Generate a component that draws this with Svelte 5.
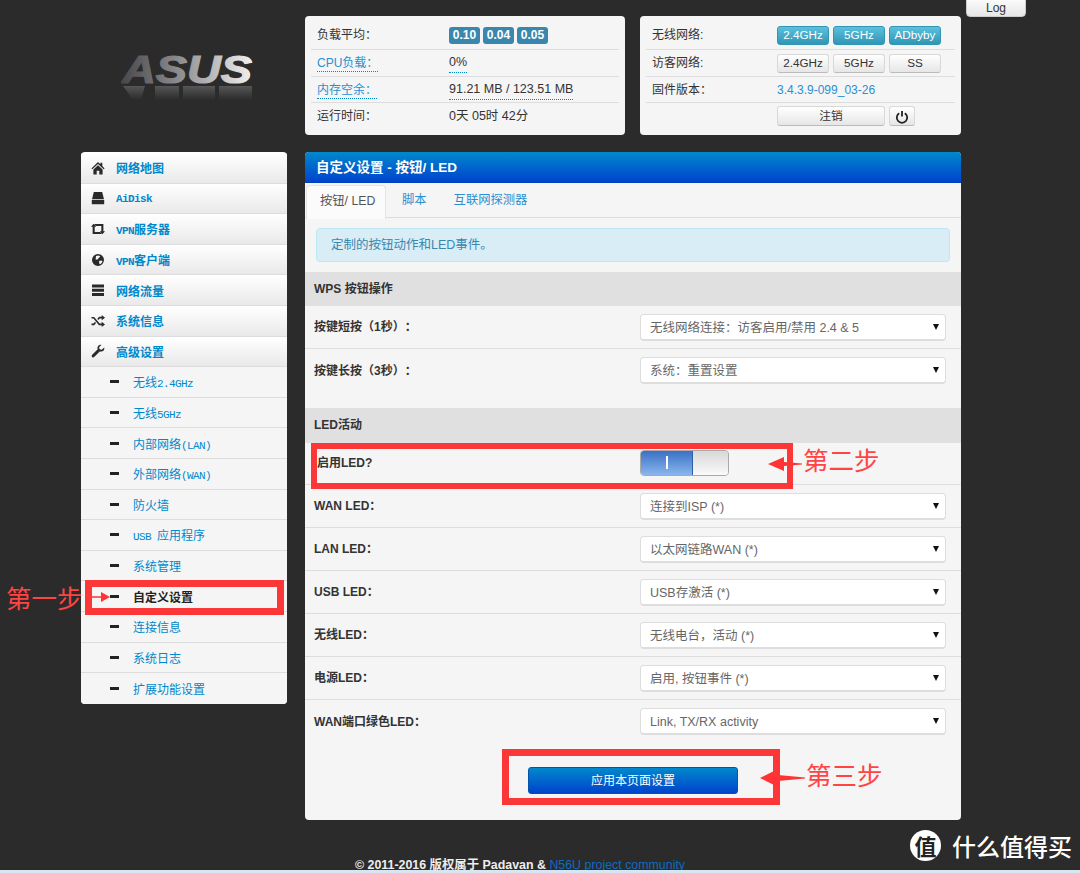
<script>
	const navMain = [
		{ label: '网络地图', icon: 'home' },
		{ label: 'AiDisk', icon: 'disk' },
		{ label: 'VPN服务器', icon: 'retweet' },
		{ label: 'VPN客户端', icon: 'globe' },
		{ label: '网络流量', icon: 'tasks' },
		{ label: '系统信息', icon: 'random' },
		{ label: '高级设置', icon: 'wrench' }
	];
	const navSub = [
		'无线2.4GHz',
		'无线5GHz',
		'内部网络(LAN)',
		'外部网络(WAN)',
		'防火墙',
		'USB 应用程序',
		'系统管理',
		'自定义设置',
		'连接信息',
		'系统日志',
		'扩展功能设置'
	];
	const ledRows = [
		['WAN LED：', '连接到ISP (*)'],
		['LAN LED：', '以太网链路WAN (*)'],
		['USB LED：', 'USB存激活 (*)'],
		['无线LED：', '无线电台，活动 (*)'],
		['电源LED：', '启用, 按钮事件 (*)'],
		['WAN端口绿色LED：', 'Link, TX/RX activity']
	];

	// the sidebar latin runs are half-width, like a bitmap CJK font
	const runs = (s) => s.split(/([\x20-\x7e]+)/).filter(Boolean);
	const isLatin = (s) => /^[\x20-\x7e]+$/.test(s);
</script>

<div class="page">
	<button class="log">Log</button>

	<div class="top">
		<div class="logo">
			<svg width="134" height="56" viewBox="0 0 134 56" aria-label="ASUS">
				<defs>
					<linearGradient id="metal" x1="0" x2="1" y1="0" y2="0">
						<stop offset="0" stop-color="#47474b" />
						<stop offset="0.45" stop-color="#8e8d90" />
						<stop offset="1" stop-color="#f0f0f0" />
					</linearGradient>
					<linearGradient id="fade" x1="0" x2="0" y1="0" y2="1">
						<stop offset="0" stop-color="#8a8a8a" stop-opacity="0.45" />
						<stop offset="1" stop-color="#8a8a8a" stop-opacity="0" />
					</linearGradient>
				</defs>
				<text x="1" y="36" class="logo-text" fill="url(#metal)" stroke="url(#metal)" stroke-width="1.2" textLength="130" lengthAdjust="spacingAndGlyphs">ASUS</text>
				<!-- reflection -->
				<path d="M2 39h22l-4 14H12zM34 39h24v14H34zM62 39h32v14H62zM98 39h33v14H98z" fill="url(#fade)" />
			</svg>
		</div>

		<div class="panel stats">
			<div class="srow">
				<span class="k">负载平均：</span>
				<span class="v"><b class="badge">0.10</b><b class="badge">0.04</b><b class="badge">0.05</b></span>
			</div>
			<div class="srow">
				<span class="k"><a class="dot">CPU负载：</a></span>
				<span class="v"><span class="dotv">0%</span></span>
			</div>
			<div class="srow">
				<span class="k"><a class="dot">内存空余：</a></span>
				<span class="v"><span class="dotv">91.21 MB / 123.51 MB</span></span>
			</div>
			<div class="srow">
				<span class="k">运行时间：</span>
				<span class="v">0天 05时 42分</span>
			</div>
		</div>

		<div class="panel net">
			<div class="srow">
				<span class="k">无线网络:</span>
				<span class="btns">
					<button class="mini on">2.4GHz</button>
					<button class="mini on">5GHz</button>
					<button class="mini on">ADbyby</button>
				</span>
			</div>
			<div class="srow">
				<span class="k">访客网络:</span>
				<span class="btns">
					<button class="mini">2.4GHz</button>
					<button class="mini">5GHz</button>
					<button class="mini">SS</button>
				</span>
			</div>
			<div class="srow">
				<span class="k">固件版本：</span>
				<a class="fw">3.4.3.9-099_03-26</a>
			</div>
			<div class="srow">
				<span class="k"></span>
				<span class="btns">
					<button class="mini logout">注销</button>
					<button class="mini power" aria-label="power">
						<svg width="14" height="14" viewBox="0 0 14 14">
							<path d="M4.200 3.200a5.200 5.200 0 1 0 5.600 0" fill="none" stroke="#222" stroke-width="1.800" />
							<path d="M7 1v5.600" stroke="#222" stroke-width="1.800" />
						</svg>
					</button>
				</span>
			</div>
		</div>
	</div>

	<div class="body">
		<nav class="side">
			{#each navMain as item}
				<div class="nav main">
					<span class="ico">
						<svg width="14" height="14" viewBox="0 0 14 14" fill="#2a2a2a">
							{#if item.icon === 'home'}
								<path d="M7 1 0.400 7.400l.9.9L7 3l5.700 5.300.9-.9L11.300 5V1.800H9.400v1.400zM2.400 8.500V13.400h3.300V9.800h2.600v3.600h3.300V8.500L7 4.300z" />
							{:else if item.icon === 'disk'}
								<path d="M2.800 1h8.400L13 8.200H1zM.8 9h12.400v4.200H.8z" />
							{:else if item.icon === 'retweet'}
								<path d="M0 4.800 2.600 1.800l2.600 3H3.700V10h5.500l1.600 1.900H1.600V4.800zM14 9.200l-2.600 3-2.600-3h1.500V4H4.800L3.200 2.100h9.200v7.100z" />
							{:else if item.icon === 'globe'}
								<path fill-rule="evenodd" d="M7 1a6 6 0 1 0 0 12A6 6 0 0 0 7 1zM5 3l2.600-.6 1.700 1-1.600 1.500-1 1.500H4.600zM8 8l2.600-.6 1 1.200-2 2.600-1.400-.6z" />
							{:else if item.icon === 'tasks'}
								<path d="M1 1.500h12v3H1zM1 5.700h12v3H1zM1 9.900h12v3H1z" />
							{:else if item.icon === 'random'}
								<path d="M.5 3h2.600l5.600 6.600h2V7.800L14 10.400 10.700 13v-1.800H8L2.400 4.600H.5zM.5 9.600h2l1.500-1.800 1 1.300-1.800 2.100H.5zM8 2.800h2.700V1L14 3.700l-3.300 2.600V4.500h-2L7.300 6.100l-1-1.200z" />
							{:else}
								<path d="M13.200 3.400 10.700 5.800 8.600 5.300 8.100 3.200 10.500.8C8.700.2 6.700 1.600 6.500 3.500c-.1.700 0 1.300.2 1.800L1 11a1.500 1.500 0 0 0 2.100 2.100l5.700-5.700c2.600.9 5.200-1.500 4.400-4z" />
							{/if}
						</svg>
					</span>
					<a>{#each runs(item.label) as r}<span class:lat={isLatin(r)}>{r}</span>{/each}</a>
				</div>
			{/each}
			{#each navSub as label}
				<div class="nav sub" class:current={label === '自定义设置'}>
					<span class="minus"></span>
					<a>{#each runs(label) as r}<span class:lat={isLatin(r)}>{r}</span>{/each}</a>
				</div>
			{/each}
		</nav>

		<main class="card">
			<h2 class="head">自定义设置 - 按钮/ LED</h2>
			<div class="tabs">
				<span class="tab active">按钮/ LED</span>
				<a class="tab">脚本</a>
				<a class="tab">互联网探测器</a>
			</div>
			<div class="alert">定制的按钮动作和LED事件。</div>

			<div class="section">WPS 按钮操作</div>
			<div class="row">
				<label>按键短按（1秒）：</label>
				<div class="select">无线网络连接：访客启用/禁用 2.4 &amp; 5</div>
			</div>
			<div class="row plain">
				<label>按键长按（3秒）：</label>
				<div class="select">系统：重置设置</div>
			</div>

			<div class="section led">LED活动</div>
			<div class="row short">
				<label class="tight">启用LED?</label>
				<div class="switch"><span class="sw-on"><i></i></span><span class="sw-off"></span></div>
			</div>
			{#each ledRows as [name, value], i}
				<div class="row" class:plain={i === ledRows.length - 1}>
					<label>{name}</label>
					<div class="select">{value}</div>
				</div>
			{/each}

			<div class="apply"><button>应用本页面设置</button></div>
		</main>
	</div>

	<footer>© 2011-2016 版权属于 Padavan &amp; <a>N56U project community</a></footer>

	<!-- annotations drawn over the screenshot -->
	<div class="mark one"></div>
	<div class="mark two"></div>
	<div class="mark three"></div>
	<span class="note n1">第一步</span>
	<span class="note n2">第二步</span>
	<span class="note n3">第三步</span>
	<svg class="arrows" width="1080" height="873" viewBox="0 0 1080 873">
		<g fill="#f33">
			<path d="M92 596.300h9V592l9 5-9 5v-4.300h-9z" />
			<path d="M768 464l16-7v5l18 1.500v1L784 466v5z" />
			<path d="M760 778l18-9v6l27 2.500v1L778 781v6z" />
		</g>
	</svg>

	<div class="wm">
		<span class="wm-badge">值</span>
		<span class="wm-text">什么值得买</span>
	</div>
	<div class="strip"></div>
</div>

<style>
	:global(body) {
		background: #2b2b2b;
	}
	.page {
		position: relative;
		width: 1080px;
		height: 873px;
		overflow: hidden;
		box-sizing: border-box;
		padding-top: 16px;
		background: #2b2b2b;
		font-family: 'Liberation Sans', 'Noto Sans CJK SC', sans-serif;
		font-size: 12px;
		color: #333;
		text-spacing-trim: space-all;
	}
	a {
		color: #0088cc;
	}
	button {
		font-family: inherit;
		cursor: pointer;
	}
	.log {
		position: absolute;
		left: 966px;
		top: -4px;
		width: 60px;
		height: 21px;
		padding: 3px 0 0;
		border: 1px solid #ccc;
		border-radius: 0 0 4px 4px;
		background: linear-gradient(#fff, #e6e6e6);
		font-size: 12px;
		color: #333;
	}

	.top {
		display: grid;
		grid-template-columns: 224px 320px 321px;
		margin-left: 81px;
		height: 119px;
	}
	.logo {
		padding: 31px 0 0 40px;
	}
	.logo-text {
		font: italic 700 39px 'Liberation Sans', sans-serif;
	}
	.panel {
		box-sizing: border-box;
		height: 119px;
		padding: 5px 6px 0;
		background: #f5f5f5;
		border-radius: 4px;
	}
	.net {
		margin-left: 15px;
		width: 321px;
	}
	.stats {
		width: 320px;
	}
	.srow {
		box-sizing: border-box;
		display: flex;
		align-items: center;
		height: 29px;
		border-bottom: 1px solid #ddd;
		padding-left: 6px;
		line-height: 18px;
	}
	.srow:nth-child(2) {
		height: 27px;
	}
	.srow:nth-child(3) {
		height: 26px;
	}
	.srow:last-child {
		height: 26px;
		border-bottom: 0;
	}
	.stats .k {
		width: 132px;
	}
	.net .k {
		width: 125px;
	}
	.v {
		display: flex;
		gap: 3px;
		font-size: 12.5px;
	}
	.badge {
		display: block;
		width: 31px;
		height: 17px;
		line-height: 17px;
		text-align: center;
		border-radius: 3px;
		background: #3a87ad;
		color: #fff;
		font-size: 12px;
	}
	.dot {
		color: #2a8fd0;
		border-bottom: 1px dotted #0088cc;
		padding-bottom: 1px;
	}
	.dotv {
		border-bottom: 1px dotted #0088cc;
		padding-bottom: 1px;
	}
	.fw {
		color: #2a8fd0;
	}
	.btns {
		display: flex;
		gap: 4px;
	}
	.mini {
		box-sizing: border-box;
		width: 52px;
		height: 19px;
		padding: 0;
		border: 1px solid #d8d8d8;
		border-bottom-color: #bbb;
		border-radius: 3px;
		background: linear-gradient(#fff, #e6e6e6);
		font-size: 11.7px;
		line-height: 16px;
		color: #333;
	}
	.mini.on {
		border-color: #2f96b4;
		background: linear-gradient(#5bc0de, #2f96b4);
		color: #fff;
	}
	.mini.logout {
		width: 108px;
		height: 20px;
	}
	.mini.power {
		width: 26px;
		height: 20px;
		padding-top: 1px;
	}
	.power svg {
		display: block;
		margin: 0 auto;
	}

	.body {
		display: grid;
		grid-template-columns: 206px 656px;
		column-gap: 18px;
		margin: 17px 0 0 81px;
		align-items: start;
	}
	.side {
		box-sizing: border-box;
		background: #fff;
		border-radius: 4px;
		overflow: hidden;
		height: 552px;
		padding-top: 1px;
	}
	.nav {
		box-sizing: border-box;
		display: flex;
		align-items: center;
		height: 30.6px;
		padding-left: 10px;
		border-bottom: 1px solid #ddd;
		font-size: 12px;
		background: #f5f5f5;
	}
	.nav:last-child {
		border-bottom: 0;
	}
	.nav .lat {
		font-family: 'Liberation Mono', monospace;
		font-size: 11px;
		letter-spacing: -0.6px;
	}
	.nav.main {
		background: linear-gradient(#fff, #e9e9e9);
		font-weight: 700;
	}
	.ico {
		width: 25px;
		display: flex;
	}
	.nav.sub {
		padding-left: 29px;
	}
	.minus {
		width: 9px;
		height: 3px;
		background: #222;
		margin-right: 14px;
	}
	.sub.current a {
		color: #222;
		font-weight: 700;
	}

	.card {
		height: 668px;
		background: #f5f5f5;
		border-radius: 4px;
		overflow: hidden;
	}
	.head {
		box-sizing: border-box;
		margin: 0;
		height: 31px;
		padding-left: 11px;
		background: linear-gradient(#0088cc, #0044cc);
		border-bottom: 1px solid #0040c0;
		color: #fff;
		font-size: 13.5px;
		line-height: 31px;
	}
	.tabs {
		display: flex;
		height: 35px;
		box-sizing: border-box;
		padding: 2px 0 0 1px;
		border-bottom: 1px solid #ddd;
		font-size: 12.3px;
		white-space: nowrap;
	}
	.tab {
		box-sizing: border-box;
		height: 33px;
		padding: 0 14px 0 13px;
		line-height: 30px;
		color: #2a8fd0;
	}
	.tab.active {
		width: 80px;
		height: 34px;
		margin-right: 3px;
		background: #fbfbfb;
		border: 1px solid #e4e4e4;
		border-bottom: 0;
		border-radius: 4px 4px 0 0;
		color: #555;
	}
	.alert {
		box-sizing: border-box;
		height: 34px;
		margin: 10px 11px 10px;
		padding-left: 14px;
		background: #d9edf7;
		border: 1px solid #bce8f1;
		border-radius: 4px;
		color: #3a87ad;
		font-size: 12.5px;
		line-height: 32px;
	}
	.section {
		box-sizing: border-box;
		height: 34px;
		padding-left: 9px;
		background: #e0e0e0;
		font-weight: 700;
		line-height: 34px;
		color: #333;
	}
	.section.led {
		margin-top: 16px;
		height: 35px;
		line-height: 35px;
	}
	.row {
		box-sizing: border-box;
		display: flex;
		align-items: center;
		height: 43px;
		padding-left: 9px;
		border-bottom: 1px solid #ddd;
	}
	.row.plain {
		border-bottom: 0;
	}
	.row.short {
		height: 42px;
	}
	.row label {
		width: 326px;
		font-weight: 700;
		margin-bottom: 3px;
	}
	.row label.tight {
		padding-left: 3px;
		width: 323px;
		margin-bottom: 5px;
		font-size: 12px;
	}
	.select {
		box-sizing: border-box;
		position: relative;
		width: 306px;
		height: 27px;
		padding-left: 9px;
		background: #fff;
		border: 1px solid #ddd;
		border-bottom-width: 2px;
		border-radius: 4px;
		font-size: 12.5px;
		line-height: 26px;
		color: #666;
	}
	.select::after {
		content: '';
		position: absolute;
		right: 6px;
		top: 9px;
		border: 3.5px solid transparent;
		border-top: 6px solid #111;
		border-bottom: 0;
	}
	.switch {
		display: flex;
		width: 89px;
		height: 26px;
		margin-bottom: 2px;
		border-radius: 4px;
		overflow: hidden;
		box-sizing: border-box;
		border: 1px solid #aaa;
	}
	.sw-on {
		width: 51px;
		display: flex;
		align-items: center;
		justify-content: center;
		background: linear-gradient(#3a71c4, #8ab6ee);
		border-right: 1px solid #2f5fa8;
	}
	.sw-on i {
		display: block;
		width: 2px;
		height: 13px;
		background: #fff;
	}
	.sw-off {
		flex: 1;
		background: linear-gradient(#d8d8d8, #fafafa);
	}
	.apply {
		padding: 24px 0 0 223px;
	}
	.apply button {
		width: 210px;
		height: 27px;
		padding: 0 0 3px;
		border: 1px solid #0055aa;
		border-radius: 3px;
		background: linear-gradient(#0088cc, #0044cc);
		color: #fff;
		font-size: 12px;
	}

	footer {
		position: absolute;
		left: 355px;
		top: 855px;
		color: #eee;
		font-size: 12.4px;
		font-weight: 700;
		white-space: nowrap;
	}
	footer a {
		color: #0a6bc4;
		font-weight: 400;
	}
	.mark {
		position: absolute;
		box-sizing: border-box;
		border: 7px solid #fb3737;
	}
	.mark.one {
		left: 85px;
		top: 580px;
		width: 199px;
		height: 35px;
	}
	.mark.two {
		left: 311px;
		top: 443px;
		width: 482px;
		height: 46px;
		border-width: 6px;
	}
	.mark.three {
		left: 502px;
		top: 749px;
		width: 278px;
		height: 56px;
	}
	.note {
		position: absolute;
		color: #f44;
		font: 400 25.5px/30px 'Noto Sans CJK SC', sans-serif;
	}
	.n1 {
		left: 6px;
		top: 582px;
	}
	.n2 {
		left: 803px;
		top: 444px;
	}
	.n3 {
		left: 806px;
		top: 759px;
	}
	.arrows {
		position: absolute;
		left: 0;
		top: 0;
		pointer-events: none;
	}
	.wm {
		position: absolute;
		left: 910px;
		top: 830px;
		display: flex;
		align-items: center;
		gap: 11px;
		color: #fff;
	}
	.wm-badge {
		width: 31px;
		height: 31px;
		border-radius: 50%;
		background: #fff;
		color: #222;
		font: 700 22px/31px 'Noto Sans CJK SC', sans-serif;
		text-align: center;
	}
	.wm-text {
		font: 500 24px/31px 'Noto Sans CJK SC', sans-serif;
	}
	.strip {
		position: absolute;
		left: 0;
		right: 0;
		bottom: 0;
		height: 3px;
		background: #d9e6f2;
	}
</style>
